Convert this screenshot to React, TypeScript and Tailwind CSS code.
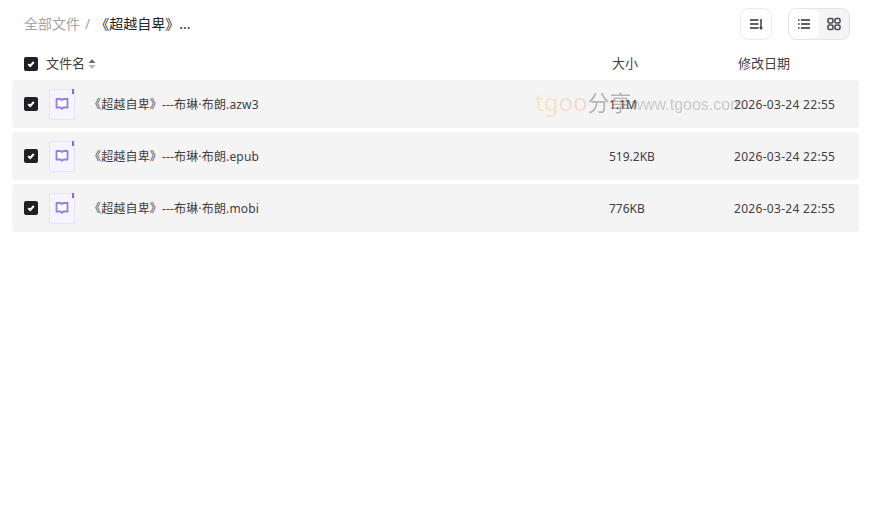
import React from "react";

const font = { fontFamily: '"Noto Sans", "Noto Sans CJK SC", sans-serif' };

function Check() {
  return (
    <span className="flex h-[14px] w-[14px] shrink-0 items-center justify-center rounded-[2px] bg-[#1f2026]">
      <svg width="10" height="10" viewBox="0 0 10 10" fill="none">
        <path d="M2.2 5.1 4.2 7 7.8 3" stroke="#fff" strokeWidth="2" />
      </svg>
    </span>
  );
}

function FileIcon() {
  return (
    <svg width="26" height="31" viewBox="0 0 26 31" fill="none" className="shrink-0">
      <path d="M.5.5H22.5L25.5 3.5V30.5H.5Z" fill="#f6f4ff" stroke="#e6e2fb" />
      <rect x="23" y="0" width="2" height="5" fill="#7c6cf0" />
      <path d="M7.5 10H11C12 10 12.7 10.4 13 11.2 13.3 10.4 14 10 15 10H18.5V18.5H14.5L13 19.8 11.5 18.5H7.5Z" fill="#fdfcff" stroke="#8f80ec" strokeWidth="1.8" strokeLinejoin="round" />
    </svg>
  );
}

const rows = [
  { name: "《超越自卑》---布琳·布朗.azw3", size: "1.1M" },
  { name: "《超越自卑》---布琳·布朗.epub", size: "519.2KB" },
  { name: "《超越自卑》---布琳·布朗.mobi", size: "776KB" },
];

export default function App() {
  return (
    <div className="relative h-[514px] w-[874px] overflow-hidden bg-white" style={font}>
      <div className="flex h-[48px] items-center pl-6 pr-6">
        <span className="relative top-[-1px] text-[14px] text-[#a3a3a8]">全部文件</span>
        <span className="relative top-[-1px] ml-[5px] text-[14px] text-[#a3a3a8]">/</span>
        <span className="relative top-[-1px] ml-[5px] text-[14px] text-[#25262b]">《超越自卑》...</span>
        <div className="ml-auto flex items-center gap-4">
          <button className="flex h-8 w-8 items-center justify-center rounded-lg border border-[#ebebeb] bg-white">
            <svg width="16" height="16" viewBox="0 0 16 16" fill="none" stroke="#2f2f35" strokeWidth="1.4">
              <path d="M2 4H10.5M2 8H10.5M2 12H10.5" />
              <path d="M13 3V12.5" />
              <path d="M11.6 11.5H14.4L13 13.6Z" fill="#2f2f35" strokeWidth="0.6" />
            </svg>
          </button>
          <div className="flex h-8 w-[62px] rounded-lg border border-[#e5e5e5] bg-[#f4f4f4]">
            <span className="flex h-[30px] w-[30px] items-center justify-center rounded-lg bg-white">
              <svg width="14" height="14" viewBox="0 0 14 14" fill="none" stroke="#2f2f35" strokeWidth="1.4">
                <path d="M1 3H2.5M1 7H2.5M1 11H2.5M4 3H13M4 7H13M4 11H13" />
              </svg>
            </span>
            <span className="flex h-[30px] w-[30px] items-center justify-center">
              <svg width="14" height="14" viewBox="0 0 14 14" fill="none" stroke="#4a4a50" strokeWidth="1.6">
                <rect x="1" y="1.5" width="5" height="4.5" rx="1.5" />
                <rect x="8" y="1.5" width="5" height="4.5" rx="1.5" />
                <rect x="1" y="8" width="5" height="4.5" rx="1.5" />
                <rect x="8" y="8" width="5" height="4.5" rx="1.5" />
              </svg>
            </span>
          </div>
        </div>
      </div>

      <div className="flex h-[32px] items-center pl-6 text-[13px] text-[#3f4046]">
        <Check />
        <span className="ml-2">文件名</span>
        <svg width="8" height="12" viewBox="0 0 8 12" className="ml-[3px]">
          <path d="M4 1 7.5 5H.5Z" fill="#6b6b70" />
          <path d="M4 11 .5 7H7.5Z" fill="#b5b5b8" />
        </svg>
        <span className="ml-[516px] w-[126px]">大小</span>
        <span>修改日期</span>
      </div>

      <div className="flex flex-col gap-1 px-3">
        {rows.map((r) => (
          <div key={r.name} className="flex h-12 w-[847px] items-center rounded-[4px] bg-[#f4f4f4] pl-3 text-[12px] text-[#3f4046]">
            <Check />
            <span className="ml-[11px]"><FileIcon /></span>
            <span className="relative top-[1px] ml-[14px] w-[520px] truncate tracking-[0.16px]">{r.name}</span>
            <span className="relative top-[1px] w-[125px]">{r.size}</span>
            <span className="relative top-[1px] tracking-[0.3px]">2026-03-24 22:55</span>
          </div>
        ))}
      </div>

      <div className="pointer-events-none absolute left-[535px] top-[86px] flex items-baseline opacity-40">
        <span className="text-[24px] leading-[32px] bg-gradient-to-r from-[#f7d568] to-[#f9a0a0] bg-clip-text text-transparent">tgoo</span>
        <span className="text-[22px] leading-[32px] text-[#555]">分享</span>
        <span className="relative top-[-1px] text-[16px] text-[#888]" style={{ fontFamily: '"Liberation Sans", sans-serif' }}>www.tgoos.com</span>
      </div>
    </div>
  );
}
